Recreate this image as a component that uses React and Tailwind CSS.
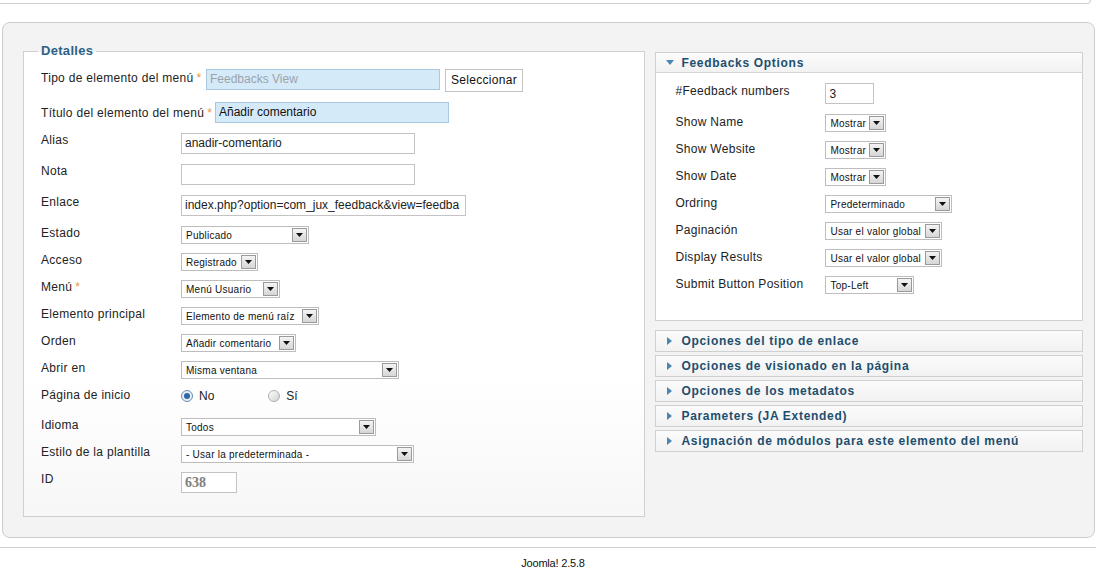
import React from 'react';

const Arrow = () => (
  <span className="flex items-center justify-center w-[15px] h-[14px] border border-[#9a9a9a] bg-gradient-to-b from-[#f4f4f4] to-[#d6d6d6] shrink-0">
    <svg width="7" height="4" viewBox="0 0 7 4"><path d="M0 0h7L3.5 4z" fill="#111" /></svg>
  </span>
);

const Select = ({ value, className }) => (
  <div className={`flex items-center justify-between h-[18px] border border-[#bdbdbd] bg-white pl-[4px] pr-[1px] ${className}`}>
    <span className="text-[10px] tracking-[0.25px] text-[#111] whitespace-nowrap overflow-hidden">{value}</span>
    <Arrow />
  </div>
);

const Input = ({ value, className = '' }) => (
  <div className={`h-[21px] border border-[#c3c3c3] bg-white px-[3px] text-[12px] leading-[19px] text-[#222] whitespace-nowrap overflow-hidden ${className}`}>
    {value}
  </div>
);

const Star = () => <span className="text-[#e39a3b] ml-[3px]">*</span>;

const Row = ({ label, h, children, pt = 'pt-0' }) => (
  <li className={`flex items-start ${h}`}>
    <span className={`w-[140px] shrink-0 leading-[14px] tracking-[0.3px] ${pt}`}>{label}</span>
    {children}
  </li>
);

const Radio = ({ checked }) => (
  <span className={`w-[12px] h-[12px] rounded-full border flex items-center justify-center ${checked ? 'border-[#6b8db0] bg-[#e8eef5]' : 'border-[#b0b0b0] bg-gradient-to-br from-[#ffffff] to-[#d0d0d0]'}`}>
    {checked && <span className="w-[6px] h-[6px] rounded-full bg-[#2d67a8]" />}
  </span>
);

const OptRow = ({ label, h = 'h-[27px]', children }) => (
  <li className={`flex items-start ${h}`}>
    <span className="w-[150px] shrink-0 leading-[14px] pt-[1px] tracking-[0.3px]">{label}</span>
    {children}
  </li>
);

const Collapsed = ({ title }) => (
  <div className="h-[22px] border border-[#d0d0d0] bg-gradient-to-b from-[#fbfbfb] to-[#f2f2f2] flex items-center pl-[11px]">
    <svg width="5" height="8" viewBox="0 0 5 8" className="mr-[9px]"><path d="M0 0l5 4-5 4z" fill="#4b86b0" /></svg>
    <span className="text-[12px] font-bold tracking-[0.7px] text-[#1d4e6e]">{title}</span>
  </div>
);

export default function App() {
  return (
    <div className="w-[1096px] h-[570px] bg-white text-[12px] text-[#222] overflow-hidden" style={{ fontFamily: '"Liberation Sans", Arial, sans-serif' }}>
      <div className="h-[4px] mr-[5px] border-b border-r border-[#cfcfcf] rounded-br-[6px]" />

      <div className="mt-[18px] ml-[2px] mr-[1px] h-[516px] border border-[#cdcdcd] rounded-[8px] bg-[#f3f3f3] pl-[20px] pr-[11px] pt-[21px] flex items-start gap-[10px]">
        <fieldset className="w-[623px] h-[473px] border border-[#cfcfcf] bg-gradient-to-b from-[#ffffff] from-70% to-[#f7f7f7] pl-[17px]">
          <legend className="ml-[-3px] px-[3px] leading-[14px] text-[13px] font-bold tracking-[0.3px] text-[#2c6288]">Detalles</legend>
          <ul className="pt-[11px]">
            <li className="flex items-start h-[33px]">
              <span className="w-[165px] shrink-0 pt-[2px] leading-[14px] tracking-[0.3px]">Tipo de elemento del menú<Star /></span>
              <div className="w-[234px] h-[21px] border border-[#a9c7de] bg-[#d5eaf9] px-[3px] text-[12px] leading-[19px] text-[#9aa3aa]">Feedbacks View</div>
              <div className="ml-[5px] h-[23px] px-[5px] border border-[#c3c3c3] bg-white text-[12px] leading-[21px] tracking-[0.3px] text-[#111]">Seleccionar</div>
            </li>
            <li className="flex items-start h-[31px]">
              <span className="w-[174px] shrink-0 pt-[4px] leading-[14px] tracking-[0.3px]">Título del elemento del menú<Star /></span>
              <div className="w-[234px] h-[21px] border border-[#a9c7de] bg-[#d5eaf9] px-[3px] text-[12px] leading-[19px] text-[#111]">Añadir comentario</div>
            </li>
            <Row label="Alias" h="h-[31px]"><Input value="anadir-comentario" className="w-[234px]" /></Row>
            <Row label="Nota" h="h-[31px]"><Input value="" className="w-[234px]" /></Row>
            <Row label="Enlace" h="h-[31px]"><Input value="index.php?option=com_jux_feedback&view=feedba" className="w-[285px]" /></Row>
            <Row label="Estado" h="h-[27px]"><Select value="Publicado" className="w-[128px]" /></Row>
            <Row label="Acceso" h="h-[27px]"><Select value="Registrado" className="w-[77px]" /></Row>
            <Row label={<>Menú<Star /></>} h="h-[27px]"><Select value="Menú Usuario" className="w-[99px]" /></Row>
            <Row label="Elemento principal" h="h-[27px]"><Select value="Elemento de menú raíz" className="w-[138px]" /></Row>
            <Row label="Orden" h="h-[27px]"><Select value="Añadir comentario" className="w-[115px]" /></Row>
            <Row label="Abrir en" h="h-[27px]"><Select value="Misma ventana" className="w-[218px]" /></Row>
            <Row label="Página de inicio" h="h-[30px]">
              <div className="flex items-center h-[14px] pt-[1px]">
                <Radio checked />
                <span className="ml-[6px] text-[12px]">No</span>
                <span className="ml-[54px]"><Radio /></span>
                <span className="ml-[6px] text-[12px]">Sí</span>
              </div>
            </Row>
            <Row label="Idioma" h="h-[27px]"><Select value="Todos" className="w-[195px]" /></Row>
            <Row label="Estilo de la plantilla" h="h-[27px]"><Select value="- Usar la predeterminada -" className="w-[233px]" /></Row>
            <Row label="ID" h="h-[20px]">
              <div className="w-[56px] h-[21px] border border-[#c3c3c3] bg-white px-[3px] text-[14px] leading-[19px] font-bold text-[#808080]" style={{ fontFamily: '"Liberation Serif", serif' }}>638</div>
            </Row>
          </ul>
        </fieldset>

        <div className="w-[428px] mt-[8px]">
          <div className="border border-[#d0d0d0] bg-white">
            <div className="h-[20px] border-b border-[#d6d6d6] bg-gradient-to-b from-[#fbfbfb] to-[#f2f2f2] flex items-center pl-[10px]">
              <svg width="8" height="5" viewBox="0 0 8 5" className="mr-[7px]"><path d="M0 0h8L4 5z" fill="#4b86b0" /></svg>
              <span className="text-[12px] font-bold tracking-[0.7px] text-[#1d4e6e]">Feedbacks Options</span>
            </div>
            <ul className="pl-[19px] pt-[10px] pb-[17px]">
              <OptRow label="#Feedback numbers" h="h-[31px]">
                <div className="w-[49px] h-[21px] border border-[#c3c3c3] bg-white px-[3px] text-[12px] leading-[21px]">3</div>
              </OptRow>
              <OptRow label="Show Name"><Select value="Mostrar" className="w-[61px]" /></OptRow>
              <OptRow label="Show Website"><Select value="Mostrar" className="w-[61px]" /></OptRow>
              <OptRow label="Show Date"><Select value="Mostrar" className="w-[61px]" /></OptRow>
              <OptRow label="Ordring"><Select value="Predeterminado" className="w-[127px]" /></OptRow>
              <OptRow label="Paginación"><Select value="Usar el valor global" className="w-[117px]" /></OptRow>
              <OptRow label="Display Results"><Select value="Usar el valor global" className="w-[117px]" /></OptRow>
              <OptRow label="Submit Button Position"><Select value="Top-Left" className="w-[89px]" /></OptRow>
            </ul>
          </div>
          <div className="mt-[9px] flex flex-col gap-[3px]">
            <Collapsed title="Opciones del tipo de enlace" />
            <Collapsed title="Opciones de visionado en la página" />
            <Collapsed title="Opciones de los metadatos" />
            <Collapsed title="Parameters (JA Extended)" />
            <Collapsed title="Asignación de módulos para este elemento del menú" />
          </div>
        </div>
      </div>

      <div className="mt-[9px] border-t border-[#d0d0d0] pt-[7px] text-center text-[11px] text-[#111] tracking-[-0.2px] pl-[10px]">Joomla! 2.5.8</div>
    </div>
  );
}
